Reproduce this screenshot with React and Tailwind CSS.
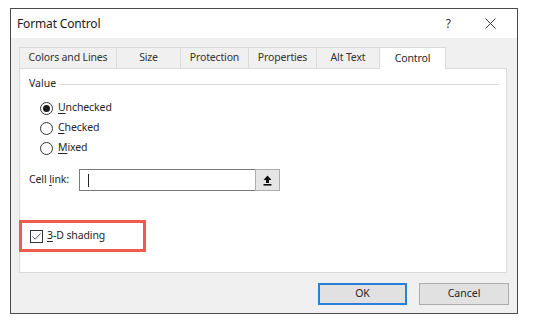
import React from "react";

const font = { fontFamily: '"Noto Sans", "Liberation Sans", sans-serif' };

function Radio({ checked, label, u }) {
  return (
    <div className="flex items-center h-[20px]">
      <div className="w-[13px] h-[13px] rounded-full border border-[#333] bg-white flex items-center justify-center">
        {checked && <div className="w-[7px] h-[7px] rounded-full bg-[#1a1a1a]" />}
      </div>
      <span className="ml-[5px] text-[10.5px] tracking-[-0.1px] text-[#262626]">
        <span className="underline underline-offset-2 decoration-[0.5px]">{u}</span>
        {label}
      </span>
    </div>
  );
}

export default function App() {
  const tabs = [
    ["Colors and Lines", "w-[98px]"],
    ["Size", "w-[65px]"],
    ["Protection", "w-[69px]"],
    ["Properties", "w-[69px]"],
    ["Alt Text", "w-[64px]"],
  ];
  return (
    <div className="w-[547px] h-[325px] bg-white pt-[8px] pl-[10px]" style={font}>
      <div className="w-[508px] h-[306px] border border-[#4a4a4a] bg-[#f0f0f0] flex flex-col">
        {/* title bar */}
        <div className="h-[29px] bg-white flex items-center pl-[6px] shrink-0">
          <span className="text-[12px] tracking-[-0.15px] text-[#1a1a1a]">Format Control</span>
          <span className="ml-auto text-[12px] text-[#333] mr-[34px]">?</span>
          <svg width="11" height="11" viewBox="0 0 11 11" className="mr-[21px]">
            <path d="M0.5 0.5 L10.5 10.5 M10.5 0.5 L0.5 10.5" stroke="#333" strokeWidth="1" />
          </svg>
        </div>
        {/* tabs */}
        <div className="mt-[8px] ml-[8px] flex items-end h-[22px] relative z-10">
          {tabs.map(([t, w]) => (
            <div
              key={t}
              className={`${w} h-[21px] border border-[#dadada] border-b-0 -ml-px first:ml-0 bg-[#f0f0f0] flex items-center justify-center text-[10.5px] tracking-[-0.15px] text-[#333]`}
            >
              {t}
            </div>
          ))}
          <div className="w-[67px] h-[22px] -ml-px border border-[#dadada] border-b-0 bg-white flex items-center justify-center text-[10.5px] tracking-[-0.15px] text-[#262626] translate-y-px">
            Control
          </div>
        </div>
        {/* panel */}
        <div className="ml-[8px] w-[488px] h-[205px] bg-white border border-[#dadada] flex flex-col shrink-0">
          <div className="flex items-center mt-[8px] ml-[9px] mr-[7px] h-[14px]">
            <span className="text-[10.5px] text-[#262626]">Value</span>
            <div className="flex-1 h-px bg-[#dcdcdc] ml-[3px]" />
          </div>
          <div className="ml-[20px] mt-[7px] flex flex-col">
            <Radio checked u="U" label="nchecked" />
            <Radio u="C" label="hecked" />
            <Radio u="M" label="ixed" />
          </div>
          <div className="flex items-center ml-[9px] mt-[11px] h-[22px]">
            <span className="text-[10.5px] tracking-[-0.1px] text-[#262626]">
              Cell <span className="underline underline-offset-2 decoration-[0.5px]">l</span>ink:
            </span>
            <div className="ml-[10px] w-[177px] h-[22px] border border-[#7a7a7a] bg-white flex items-center pl-[8px]">
              <div className="w-px h-[13px] bg-[#222]" />
            </div>
            <div className="w-[25px] h-[22px] -ml-px border border-[#adadad] bg-[#e6e6e6] flex items-center justify-center">
              <svg width="9" height="11" viewBox="0 0 9 11">
                <path d="M4.5 0.5 L8.5 5 L6 5 L6 8 L3 8 L3 5 L0.5 5 Z" fill="#111" />
                <rect x="0.5" y="9" width="8" height="1.6" fill="#111" />
              </svg>
            </div>
          </div>
          <div className="mt-[29px] -ml-px w-[127px] h-[32px] border-[3px] border-[#f05a50] flex items-center pl-[8px]">
            <div className="w-[13px] h-[13px] border border-[#333] bg-white flex items-center justify-center">
              <svg width="11" height="11" viewBox="0 0 11 11">
                <path d="M1.5 5.5 L4.2 8.2 L9.5 2.5" fill="none" stroke="#444" strokeWidth="0.9" />
              </svg>
            </div>
            <span className="ml-[4px] text-[10.5px] tracking-[-0.1px] text-[#262626]">
              <span className="underline underline-offset-2 decoration-[0.5px]">3</span>-D shading
            </span>
          </div>
        </div>
        {/* footer */}
        <div className="flex justify-end mt-[10px] mr-[8px] gap-[12px]">
          <div className="w-[89px] h-[22px] border-2 border-[#2b7fd4] bg-[#e1e1e1] flex items-center justify-center text-[10.5px] text-[#262626]">
            OK
          </div>
          <div className="w-[90px] h-[22px] border border-[#adadad] bg-[#e1e1e1] flex items-center justify-center text-[10.5px] text-[#262626]">
            Cancel
          </div>
        </div>
      </div>
    </div>
  );
}
